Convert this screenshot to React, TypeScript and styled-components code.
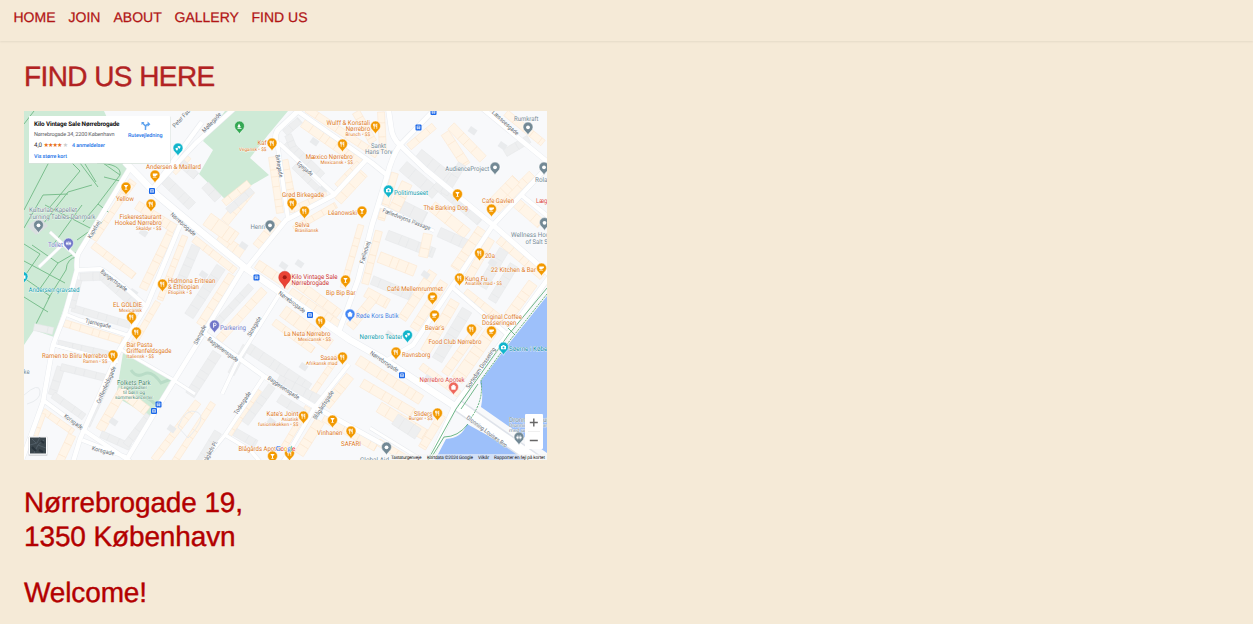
import React from "react";
import styled, { createGlobalStyle } from "styled-components";

const GlobalStyle = createGlobalStyle`
  body { margin: 0; background: #f5ead7; font-family: "Liberation Sans", Arial, sans-serif; }
`;

const Page = styled.div`
  height: 624px;
  overflow: hidden;
  background: #f5ead7;
`;
const NavBar = styled.nav`
  display: flex;
  gap: 13px;
  height: 41px;
  box-sizing: border-box;
  padding: 9px 14px 0 13.5px;
  box-shadow: 0 1px 2px rgba(0, 0, 0, 0.07);
`;
const NavLink = styled.a<{ $w: number }>`
  width: ${(p) => p.$w}px;
  white-space: nowrap;
  color: #b11414;
  font-size: 14px;
  line-height: 17px;
  text-decoration: none;
  text-rendering: geometricPrecision;
  -webkit-text-stroke: 0.25px #b11414;
`;
const Main = styled.main`
  display: flex;
  flex-direction: column;
  align-items: flex-start;
  padding: 19px 24px 0;
  text-rendering: geometricPrecision;
`;
const Title = styled.h1`
  margin: 0 0 17px;
  color: #b22222;
  font-size: 28px;
  font-weight: 400;
  line-height: 34px;
  letter-spacing: -0.58px;
  -webkit-text-stroke: 0.4px #b22222;
`;
const MapFrame = styled.div`
  width: 523px;
  height: 349px;
  overflow: hidden;
  margin-bottom: 26px;
`;
const MapSvg = styled.svg`
  display: block;
  font-family: Roboto, sans-serif;
  text-rendering: geometricPrecision;
`;
const Address = styled.p<{ $gap?: number }>`
  margin: 0 0 ${(p) => p.$gap ?? 0}px;
  color: #b30000;
  font-size: 28px;
  line-height: 33.5px;
  letter-spacing: -0.13px;
  -webkit-text-stroke: 0.4px #b30000;
`;

const ORANGE = "#f29900";
const FOOD = "#dd7a1e";
const GREY = "#738995";
const TEAL = "#12b5cb";
const CREAM = "#fff5e8";
const STONE = "#eeeff0";

const roads: [string, number][] = [
  ["M202 122L152 190", 4.5],
  ["M130 168L78 254Q76 262 77 270L65 314L53 345L43 402L22 460", 4.5],
  ["M125 162L157 195L200 231L247 269L280 292L350 340L380 357L456 407", 6.5],
  ["M237 106L196 143L152 190", 4.5],
  ["M180 225L147 305L120 349L80 439L73 462", 4.5],
  ["M77 270L100 269Q107 271 145 305", 4],
  ["M65 314L80 320L130 336", 3.5],
  ["M78 258L50 232M62 245L39 267", 2.5],
  ["M53 345L118 362", 2.5],
  ["M43 400L85 431L131 462M82 440L126 457", 4],
  ["M120 349L172 379L195 394", 3],
  ["M243 268L203 334L164 397L127 459", 4.5],
  ["M276 293L238 352L222 384", 3.5],
  ["M200 330L265 377L315 407L382 444", 4.5],
  ["M253 375L218 433L201 462M218 433L244 450L262 464", 3.5],
  ["M339 364L315 407L283 462", 4],
  ["M242 268L277 220L322 200L339 187L366 160", 4.5],
  ["M266 141L277 219", 4],
  ["M266 141L279 148L322 195", 4],
  ["M265 141Q263 132 268 129L290 109", 5],
  ["M284 110L340 148L371 174", 4.5],
  ["M374 106Q374 126 380 144L370 174L344 285L329 326", 5],
  ["M380 144L412 112L424 108", 4.5],
  ["M374 136L402 166L472 228L524 274", 5],
  ["M462 104L490 127L530 158L470 228", 4.5],
];

const shiftedRoads: [string, number][] = [
  ["M53 345L118 362", 2.5],
  ["M296 110L372 163L388 176", 4.5],
  ["M388 106L391 127Q392 138 400 145Q392 156 387 176L372 225L358 280L338 334", 5],
  ["M400 145L436 108", 4.5],
  ["M400 145L426 170L493 225L550 275", 5],
  ["M477 104L505 127L550 164L493 225", 4.5],
  ["M493 225L453 285L413 345L386 361", 4.5],
  ["M452 287L508 335", 4],
  ["M380 206L434 231", 3],
  ["M520 194L550 218", 4],
  ["M550 276L507 335L455 405L429 462", 4.5],
  ["M370 428L422 460", 3],
  ["M247 268L286 220L334 195L366 160", 4.5],
  ["M277 141L288 219", 4],
  ["M279 143L335 195", 4],
  ["M276 141Q274 132 281 127L298 111", 5],
  ["M280 293L238 360L222 394", 3.5],
  ["M265 375L225 435L203 462M225 435L250 450L262 464", 3.5],
  ["M349 364L315 407L283 462", 4],
];
const streetGrid = [...roads.slice(0, 12), roads[13], ...shiftedRoads];

type Strip = [number, number, number, number, number, string];
const strips: Strip[] = [
  [173, 172, 188, 156, 8, CREAM], [165, 180, 192, 206, 10, STONE], [178, 160, 196, 176, 9, STONE],
  [120, 199, 133, 181, 10, CREAM], [94, 240, 125, 193, 8, CREAM],
  [93, 245, 134, 276, 8, CREAM], [143, 289, 171, 232, 8, CREAM], [137, 205, 175, 229, 9, CREAM],
  [80, 277, 109, 276, 8, STONE], [104, 278, 139, 309, 10, STONE], [72, 308, 130, 325, 8, STONE],
  [79, 280, 72, 308, 7, STONE], [58, 343, 108, 354, 7, STONE], [64, 323, 123, 341, 7, CREAM],
  [34, 327, 53, 331, 9, STONE], [194, 239, 235, 271, 9, CREAM], [185, 236, 160, 300, 8, CREAM],
  [158, 302, 127, 355, 8, CREAM], [196, 246, 177, 290, 11, STONE], [221, 267, 189, 316, 11, STONE],
  [232, 275, 200, 325, 8, CREAM], [264, 290, 219, 340, 9, CREAM], [251, 286, 216, 324, 7, STONE],
  [218, 238, 242, 254, 12, CREAM], [225, 222, 251, 190, 9, CREAM], [207, 219, 235, 239, 14, CREAM],
  [228, 211, 252, 190, 9, STONE], [205, 185, 218, 199, 9, STONE], [224, 203, 249, 183, 9, CREAM],
  [272, 157, 280, 213, 7, CREAM], [287, 142, 322, 176, 8, STONE], [284, 160, 294, 212, 8, CREAM],
  [294, 166, 324, 195, 8, STONE], [294, 210, 327, 195, 8, CREAM], [294, 229, 336, 205, 8, CREAM],
  [338, 201, 364, 173, 10, CREAM], [285, 133, 300, 120, 9, STONE], [303, 123, 363, 165, 9, CREAM],
  [337, 186, 359, 163, 8, CREAM], [288, 135, 293, 147, 7, STONE], [307, 109, 377, 155, 8, CREAM],
  [381, 112, 383, 151, 9, CREAM], [356, 112, 373, 142, 8, CREAM], [257, 264, 290, 286, 10, CREAM],
  [257, 247, 279, 220, 10, CREAM], [289, 277, 339, 314, 10, CREAM], [289, 293, 340, 328, 12, CREAM],
  [361, 225, 343, 288, 8, CREAM], [379, 231, 365, 284, 9, CREAM], [395, 173, 381, 220, 9, CREAM],
  [409, 147, 434, 126, 9, CREAM], [418, 154, 449, 179, 13, STONE], [445, 133, 466, 165, 10, CREAM],
  [451, 126, 483, 159, 11, CREAM], [403, 166, 436, 194, 13, STONE], [435, 184, 480, 222, 10, STONE],
  [395, 203, 425, 218, 14, STONE], [407, 183, 394, 210, 12, CREAM], [432, 206, 467, 234, 12, CREAM],
  [444, 194, 462, 164, 9, STONE], [496, 210, 532, 174, 10, CREAM], [488, 208, 516, 179, 10, CREAM],
  [506, 113, 543, 143, 9, CREAM], [505, 153, 529, 139, 10, STONE], [513, 200, 541, 224, 11, CREAM],
  [387, 235, 434, 253, 12, STONE], [379, 257, 415, 271, 11, CREAM], [372, 280, 411, 296, 11, STONE],
  [439, 232, 470, 246, 11, STONE], [428, 234, 423, 257, 10, CREAM], [482, 229, 455, 269, 10, CREAM],
  [444, 282, 414, 329, 9, CREAM], [433, 272, 402, 319, 9, CREAM], [366, 292, 388, 304, 12, CREAM],
  [373, 299, 350, 327, 9, CREAM], [499, 239, 543, 276, 9, CREAM], [491, 239, 469, 277, 10, CREAM],
  [504, 250, 482, 287, 12, STONE], [465, 292, 502, 321, 10, CREAM], [533, 283, 509, 316, 10, CREAM],
  [514, 265, 492, 301, 10, STONE], [455, 301, 425, 352, 10, CREAM], [467, 310, 437, 360, 11, STONE],
  [492, 330, 457, 380, 12, CREAM], [479, 326, 445, 374, 10, CREAM], [421, 366, 459, 394, 9, CREAM],
  [358, 360, 421, 400, 12, CREAM], [350, 376, 326, 406, 9, CREAM], [338, 356, 310, 397, 8, CREAM],
  [283, 311, 330, 345, 12, CREAM], [274, 322, 313, 350, 8, CREAM], [247, 347, 309, 388, 10, STONE],
  [246, 346, 231, 374, 9, STONE], [217, 353, 190, 395, 10, STONE], [278, 379, 321, 401, 9, STONE],
  [259, 390, 228, 436, 8, CREAM], [272, 386, 245, 423, 10, STONE], [235, 432, 256, 444, 10, STONE],
  [308, 407, 284, 447, 8, CREAM], [279, 398, 304, 414, 10, STONE], [324, 417, 376, 447, 9, CREAM],
  [320, 421, 299, 454, 10, CREAM], [379, 407, 427, 436, 11, CREAM], [362, 383, 413, 413, 11, CREAM],
  [395, 419, 418, 434, 14, STONE], [442, 415, 422, 448, 9, CREAM], [378, 442, 408, 460, 9, CREAM],
  [218, 432, 198, 465, 9, STONE], [213, 403, 173, 464, 8, CREAM], [198, 402, 154, 460, 7, CREAM],
  [110, 377, 87, 426, 8, STONE], [61, 367, 52, 395, 9, STONE], [61, 367, 106, 378, 8, STONE],
  [53, 395, 84, 417, 9, STONE], [123, 390, 100, 430, 9, CREAM],
  [120, 390, 147, 411, 10, CREAM], [101, 434, 130, 447, 9, STONE], [126, 445, 149, 415, 9, STONE],
  [43, 411, 73, 432, 8, CREAM], [72, 435, 58, 465, 8, CREAM], [42, 413, 31, 443, 9, CREAM],
];

function Buildings({ data }: { data: Strip }) {
  const [x1, y1, x2, y2, w, fill] = data;
  const dx = x2 - x1, dy = y2 - y1, len = Math.hypot(dx, dy);
  const angle = (Math.atan2(dy, dx) * 180) / Math.PI;
  const boxes: React.ReactElement[] = [];
  let at = 0, i = Math.round(x1 + y1);
  while (at < len) {
    const size = Math.min(len - at, 7 + ((i * 7) % 9));
    const inset = (i * 5) % 3;
    boxes.push(<rect key={at} x={at} y={-w / 2 + inset / 2} width={size} height={w - inset} />);
    at += size;
    i += 3;
  }
  return (
    <g transform={`translate(${x1} ${y1}) rotate(${angle})`} fill={fill} stroke={fill === CREAM ? "#fce6ce" : "#e5e7e9"} strokeWidth=".5">
      {boxes}
    </g>
  );
}

type PinKind = "food" | "cup" | "bar" | "dot" | "bag" | "park" | "mask" | "p" | "cam" | "wc";
const pins: [number, number, string, PinKind][] = [
  [126, 188, ORANGE, "bar"], [155, 176, ORANGE, "cup"], [151, 205, ORANGE, "food"], [178, 149, TEAL, "mask"],
  [239.5, 127, "#34a853", "park"], [272, 144, ORANGE, "food"], [342.5, 145, ORANGE, "food"], [375.5, 127, ORANGE, "food"],
  [292, 204, ORANGE, "food"], [304.5, 212, ORANGE, "food"], [362, 212, ORANGE, "bar"], [270, 226, GREY, "dot"],
  [388.5, 191, TEAL, "cam"], [457.5, 195, ORANGE, "bar"], [491.5, 210, ORANGE, "cup"], [495, 168, GREY, "dot"],
  [528, 128, GREY, "dot"], [544, 168, GREY, "dot"], [544.5, 223.500, GREY, "dot"], [38.5, 226, GREY, "dot"],
  [68.5, 244, "#7177c9", "wc"], [23, 277.500, TEAL, "cam"], [162.5, 285, ORANGE, "food"], [131.5, 318, ORANGE, "food"],
  [136.5, 333, ORANGE, "food"], [113, 356, ORANGE, "food"], [214.5, 326, "#7177c9", "p"], [345.5, 281, ORANGE, "bar"],
  [350, 315, "#4285f4", "bag"], [320.5, 322, ORANGE, "food"], [479.5, 254, ORANGE, "food"], [459.5, 279, ORANGE, "food"],
  [541.5, 269, ORANGE, "cup"], [432.5, 298, ORANGE, "cup"], [434.5, 316, ORANGE, "cup"], [407.5, 336, TEAL, "mask"],
  [471.5, 330, ORANGE, "food"], [491.5, 332, ORANGE, "cup"], [503.5, 348, TEAL, "cam"], [396, 353, ORANGE, "food"],
  [342.5, 358, ORANGE, "food"], [453.5, 388, "#ee675c", "bag"], [437.5, 414, ORANGE, "food"], [303.5, 417, ORANGE, "food"],
  [332.5, 421, ORANGE, "bar"], [351, 432, ORANGE, "food"], [386.5, 448, GREY, "dot"], [289.5, 454, ORANGE, "food"],
  [272.5, 457, ORANGE, "bar"], [519, 438, GREY, "wc"],
];

function Glyph({ kind }: { kind: PinKind }) {
  switch (kind) {
    case "food": return <path d="M-2-2.500v1.700q0 .7.700.7t.7-.7v-1.700M-1.300-2.500v5M1.300 2.500v-5q-.9.600-.9 2.700h.9" stroke="#fff" strokeWidth=".75" fill="none" />;
    case "cup": return <path d="M-2.200-1.900h4.600v1.800H1.300q0 1.300-1.200 1.300H-.9q-1.300 0-1.300-1.300zM-2.200 1.800h3.800v.5h-3.800z" fill="#fff" />;
    case "bar": return <path d="M-2.200-2.200h4.400L.5 0v1.900H1.400v.6h-2.800v-.6h.9V0z" fill="#fff" />;
    case "bag": return <path d="M-2.200-1h4.400l-.4 3.200h-3.600zM-1-1v-1.200h2V-1" fill="#fff" stroke="#fff" strokeWidth=".4" />;
    case "park": return <path d="M-.5-2.700L1.400 1h-1.500v.8h-.8V1h-1.300zM-2 1.800h4v.7h-4z" fill="#fff" />;
    case "mask": return <path d="M-2.500-.3l2.400-.2q.3 2.500-.9 2.900-1.500-.5-1.500-2.700zM-.2-2.300l2.700.2q0 2.700-1.500 2.900-.2-1.900-1.200-1.500z" fill="#fff" />;
    case "cam": return <><path d="M-2.500-1.400h1.200l.5-.8h1.600l.5.8h1.200v3.400h-5z" fill="#fff" /><circle cy=".2" r=".9" fill={TEAL} /></>;
    case "wc": return <path d="M-1.500-2v1M1.500-2v1M-2.300-.6h1.600v1.500h-1.600zM.7-.6h1.600v1.500H.7zM-1.500.9v1.200M1.500.9v1.200M0-2v4" fill="#fff" stroke="#fff" strokeWidth=".5" />;
    case "p": return <path d="M-.9 2.400v-4.600H.4q1.200 0 1.200 1.300T.4.400H-.9" fill="none" stroke="#fff" strokeWidth=".9" />;
    default: return <circle r="1.900" fill="#fff" />;
  }
}

function Pin({ x, y, color, kind }: { x: number; y: number; color: string; kind: PinKind }) {
  return (
    <g transform={`translate(${x} ${y - 0.7})`}>
      <path d="M0 8C-.7 4.900-5 3.500-5-.2A5 5 0 0 1 5-.2C5 3.500.7 4.900 0 8z" fill={color} stroke="#fff" strokeWidth=".5" />
      <Glyph kind={kind} />
    </g>
  );
}

type Label = [string, number, number, number, string, number?];
const labels: Label[] = [
  ["Andersen & Maillard", 146, 168.5, 55, FOOD], ["Yellow", 116, 201.3, 18, FOOD],
  ["Fiskerestaurant", 119.5, 218.7, 42, FOOD], ["Hooked Nørrebro", 114.8, 225, 47, FOOD], ["Skaldyr • $$", 136, 230.3, 25.5, FOOD, 4.9],
  ["Kulturlab Kapellet", 29, 212.2, 48, GREY], ["Turning Tables Danmark", 29, 218.5, 66.5, GREY],
  ["Toilet", 48, 247.3, 15, "#7177c9"], ["Andersen-gravsted", 28.5, 291.8, 51, "#129eaf"],
  ["Kaf", 257.5, 145.3, 9, FOOD], ["Vegansk • $$", 239, 150.5, 27.5, FOOD, 4.9],
  ["Wulff & Konstali", 326.5, 125, 43.5, FOOD], ["Nørrebro", 345.7, 131.2, 24.5, FOOD], ["Brunch • $$", 345.5, 136.2, 24.7, FOOD, 4.9],
  ["Mæxico Nørrebro", 305.8, 158.8, 47, FOOD], ["Mexicansk • $$", 320.5, 163.5, 32.5, FOOD, 4.9],
  ["Sankt", 371, 147.7, 15, GREY], ["Hans Torv", 365, 153.8, 27.5, GREY],
  ["Grød Birkegade", 282, 197.4, 42, FOOD], ["Selva", 295, 226.5, 14.5, FOOD], ["Brasiliansk", 295, 231.5, 23.5, FOOD, 4.9],
  ["Léanowski", 328, 215.3, 29, FOOD], ["Henri", 250.5, 228.8, 14.5, GREY],
  ["Rumkraft", 514, 121, 24.5, GREY], ["AudienceProject", 445.3, 171, 44, GREY], ["Rolan", 535, 181.5, 16, GREY],
  ["Politimuseet", 394, 195, 34, "#129eaf"], ["The Barking Dog", 423.5, 209.5, 44.5, FOOD], ["Cafe Gavlen", 482, 203, 32, FOOD],
  ["Læge", 536, 202.5, 14.5, "#dc4d48"], ["Wellness House", 511, 237.3, 45, GREY], ["of Salt Spa", 525.5, 243.5, 29, GREY],
  ["Hidmona Eritrean", 168, 283, 47.5, FOOD], ["& Ethiopian", 168, 289, 31, FOOD], ["Etiopisk • $", 168, 294, 24, FOOD, 4.9],
  ["EL GOLDIE", 113, 306.5, 29, FOOD], ["Mexicansk", 119, 311.5, 23, FOOD, 4.9],
  ["Bar Pasta", 126.5, 347, 26, FOOD], ["Griffenfeldsgade", 126.5, 353, 45, FOOD], ["Italiensk • $$", 126.5, 358, 27.5, FOOD, 4.9],
  ["Ramen to Bíiru Nørrebro", 42, 358, 65.5, FOOD], ["Ramen • $$", 83, 362.7, 24.5, FOOD, 4.9],
  ["Parkering", 220, 329.5, 26, "#7177c9"], ["Kilo Vintage Sale", 291.5, 278.7, 46, "#c9302f"], ["Nørrebrogade", 291.5, 285, 37.5, "#c9302f"],
  ["Bip Bip Bar", 326, 295, 29.5, FOOD], ["Røde Kors Butik", 356, 318.3, 42.5, "#3f7de0"],
  ["La Neta Nørrebro", 284, 336.2, 46.5, FOOD], ["Mexicansk • $$", 298, 341, 33, FOOD, 4.9],
  ["20a", 485, 257.7, 10, FOOD], ["22 Kitchen & Bar", 491, 272, 45, FOOD], ["Kung Fu", 465, 280.5, 22.5, FOOD], ["Asiatisk mad • $$", 465, 285.2, 37, FOOD, 4.9],
  ["Café Mellemrummet", 387, 290.5, 56, FOOD], ["Bevar's", 425, 329.5, 19.5, FOOD], ["Original Coffee", 482, 319.3, 40, FOOD], ["Dosseringen", 482, 325.3, 34.5, FOOD],
  ["Food Club Nørrebro", 428.5, 344.3, 53, FOOD], ["Nørrebro Teater", 359.5, 339, 43, "#129eaf"],
  ["Søerne i København", 509, 350.8, 55, "#148eaa"], ["Ravnsborg", 402, 356.5, 28.5, FOOD],
  ["Sasaa", 320.5, 359.5, 16.5, FOOD], ["Afrikansk mad", 306, 364.5, 31.5, FOOD, 4.9],
  ["Nørrebro Apotek", 419.5, 382, 45, "#dc4d48"], ["Sliders", 414, 415.5, 18.5, FOOD], ["Burger • $$", 408.8, 420.2, 24, FOOD, 4.9],
  ["Folkets Park", 117, 384.500, 33.5, "#48886b", 6.9], ["Legepladser", 121, 389.2, 26, "#48886b", 4.9], ["til børn og", 123, 394.2, 22, "#48886b", 4.9], ["sommerkoncerter", 115, 399, 38, "#48886b", 4.9],
  ["Kate's Joint", 266.5, 416.2, 32, FOOD], ["Asiatisk", 281.5, 421, 17, FOOD, 4.9], ["fusionskøkken • $$", 258, 425.7, 40.5, FOOD, 4.9],
  ["Vinhanen", 317, 435, 25.5, FOOD], ["SAFARI", 341, 446, 20, FOOD], ["Blågårds Apotek", 238.5, 451, 44, FOOD],
  ["Global Aid", 360, 461.5, 29, GREY], ["ke", 23.5, 373.5, 6, GREY],
  ["Dronning Louises Bro", 509, 421.7, 60, GREY], ["Dronning Louises", 509, 426.700, 40, GREY, 4.9], ["med udsigt", 509, 431.5, 27, GREY, 4.9],
];
const streets: [string, number, number, number, number][] = [
  ["Peter Fabers Gade", 175, 128, -47, 44], ["Møllegade", 204.5, 133, -47, 25], ["Birkegade", 275.3, 155, 80, 23],
  ["Egegade", 296.5, 164, 40, 19], ["Nørrebrogade", 170, 215, 42, 32], ["Nørrebrogade", 278, 294, 37, 32],
  ["Nørrebrogade", 369.5, 354, 34, 33], ["Læssøesgade", 491.5, 113, 42, 34], ["Fælledvejens Passage", 382, 212, 21, 51],
  ["Fælledvej", 363.5, 264, -73, 23], ["Kapelvej", 91, 239, -60, 20], ["Bangertsgade", 100, 272.500, 37, 32],
  ["Tjørnegade", 85, 322.5, 13, 26], ["Stengade", 197, 345, -63, 21], ["Slotsgade", 250.5, 337, -60, 22],
  ["Baggesensgade", 207, 340, 37, 37], ["Baggesensgade", 267, 379, 34, 37], ["Griffenfeldsgade", 100, 404, -66, 40],
  ["Korsgade", 63.5, 417, 36, 22], ["Korsgade", 91.5, 450, 14, 23], ["Todesgade", 237, 415, -57, 26],
  ["Blågårds Pl.", 206, 464, -62, 25], ["Blågårdsgade", 316, 420, -57, 33], ["Sortedam Dossering", 469, 389, -56, 48],
  ["Dronning Louises Bro", 466, 418.5, 36.5, 49],
];
const transit = [[152, 191], [256.5, 277.5], [310, 315], [418.5, 127.5], [433.5, 112], [402, 375.3], [158.5, 404.5], [154, 411]];
const courtyards = [[282, 261], [298, 259], [313, 137], [323, 183], [132, 288], [142, 228], [202, 270], [242, 241], [302, 362], [270, 417], [424, 270], [501, 141], [471, 126], [112, 417], [170, 424], [491, 258], [388, 330], [427, 374]];

function CityMap() {
  return (
    <MapSvg width="523" height="349" viewBox="24 111 523 349" role="img" aria-label="Map">
      <rect x="24" y="111" width="523" height="349" fill="#f8f9fb" />
      <path d="M24 111H108L156 164L130 168L78 249L77 270L54 337L34 330L24 345z" fill="#ceead6" />
      <path d="M104 111H166V168L130 168z" fill="#f8f9fb" />
      <path d="M225 111H288L268 135L250 158L269 175L226 200L199 174L213 150L203 141z" fill="#ceead6" />
      <path d="M123 353L171 380L151 417L116 397z" fill="#ceead6" />
      <path d="M131 370q5 8 13 4t17 9l10-4M140 396q10 2 15 8" stroke="#b9dcc7" strokeWidth="3" fill="none" />
      <path d="M34 111L24 124M49 162L24 210M72 163L80 171L50 207M80 163L98 187M97 163Q122 164 120 175L98 204L112 215L77 240M120 175L103 163M104 177L120 181M96 182L85 164M92 185L68 192L36 233M68 194L43 195L24 228M82 205L53 245M45 205L94 230M98 204L83 222M24 244L40 254L24 277M32 245L58 263L39 290M24 278L50 296L36 324M24 261L65 283M24 297L48 312M58 263L77 252M77 257Q67 258 66 270L48 299" stroke="#70b985" strokeWidth=".9" fill="none" />
      <path d="M27 226l13-9 8 9-12 9z" fill="#dadfe0" />
      {strips.map((s, i) => <Buildings key={i} data={s} />)}
      {courtyards.map(([x, y], i) => (
        <rect key={i} x={x} y={y} width="8" height="6" fill="#e9ebed" transform={`rotate(35 ${x} ${y})`} />
      ))}
      <path d="M24 395q15-13 16-4t-13 13M178 427q8-20 19-15t-9 26z" stroke="#e9ecef" fill="none" />
      <path d="M547 296L511 341L480 382Q484 393 481 407L547 453zM467 424Q462 438 446 439L435 460H532z" fill="#9dc0fa" />
      <path d="M457 405L540 463" stroke="#dfe3ea" strokeWidth="13" />
      <path d="M457 405L540 463" stroke="#fff" strokeWidth="10" />
      {streetGrid.map(([d, w], i) => <path key={`c${i}`} d={d} fill="none" stroke="#e8ebef" strokeWidth={w + 1} strokeLinejoin="round" />)}
      {streetGrid.map(([d, w], i) => <path key={i} d={d} fill="none" stroke="#fff" strokeWidth={w} strokeLinejoin="round" />)}
      <path d="M547 288L509 334L456 409L428 460M478 384L461 409M468 424Q458 437 444 437L431 458M508 328L515 335" fill="none" stroke="#4da66b" strokeWidth=".8" />
      <path d="M547 294L511 339L481 380Q484 400 471 418" fill="none" stroke="#4da66b" strokeWidth=".9" strokeDasharray="2 1" />
      <g fill="#626a72" fontSize="6" stroke="#fff" strokeWidth=".8" paintOrder="stroke">
        {streets.map(([t, x, y, a, w], i) => <text key={i} transform={`translate(${x} ${y}) rotate(${a})`} textLength={w} lengthAdjust="spacingAndGlyphs">{t}</text>)}
      </g>
      <g stroke="#fff" strokeWidth=".8" strokeOpacity=".8" paintOrder="stroke" strokeLinejoin="round">
        {labels.map(([t, x, y, w, c, s], i) => <text key={i} x={x} y={y} textLength={w} lengthAdjust="spacingAndGlyphs" fill={c} fontSize={s ?? 6.6}>{t}</text>)}
      </g>
      {transit.map(([x, y], i) => (
        <g key={i} transform={`translate(${x} ${y})`}>
          <rect x="-3" y="-3" width="6" height="6" rx="1" fill="#1a67e8" />
          <path d="M-1.400-1.500h2.800V1h-2.800zM-1.200.900v.900M1.200.900v.900M-1.400-.1h2.800" fill="none" stroke="#fff" strokeWidth=".6" />
        </g>
      ))}
      {pins.map(([x, y, c, k], i) => <Pin key={i} x={x} y={y} color={c} kind={k} />)}
      <path d="M284.700 288.500c-1-5-6-6.300-6-11.300a6 6 0 0 1 12 0c0 5-5 6.300-6 11.300z" fill="#ea4335" stroke="#c5221f" strokeWidth=".4" />
      <circle cx="284.700" cy="277.300" r="2" fill="#a11a14" />
      <text x="275.500" y="450.500" fontSize="7" fontWeight="500" textLength="20" stroke="#fff" strokeWidth=".8" paintOrder="stroke" fontFamily="Lato, sans-serif">
        <tspan fill="#4285f4">G</tspan><tspan fill="#ea4335">o</tspan><tspan fill="#fbbc04">o</tspan><tspan fill="#4285f4">g</tspan><tspan fill="#34a853">l</tspan><tspan fill="#ea4335">e</tspan>
      </text>
      <rect x="29" y="116.500" width="141.500" height="47.200" rx=".6" fill="#d8e2dc" />
      <rect x="29" y="116" width="141" height="47" rx=".6" fill="#fff" />
      <text x="34" y="125.800" fontSize="6.300" fontWeight="700" fill="#111" textLength="85.500">Kilo Vintage Sale Nørrebrogade</text>
      <text x="34" y="135.600" fontSize="5.500" fill="#5d6064" textLength="80.500">Nørrebrogade 34, 2200 København</text>
      <text x="34" y="146.900" fontSize="6.200" fill="#333" textLength="8">4,0</text>
      <text x="43.500" y="146.600" fontSize="6" fill="#e7711b" textLength="19" fontFamily="DejaVu Sans">★★★★</text>
      <text x="62.800" y="146.600" fontSize="6" fill="#ccc" textLength="5" fontFamily="DejaVu Sans">★</text>
      <g fill="#1a73e8" fontSize="5.400" fontWeight="500">
        <text x="72" y="146.700" textLength="33">4 anmeldelser</text>
        <text x="34" y="158" textLength="33">Vis større kort</text>
        <text x="128" y="137.200" textLength="34.500">Rutevejledning</text>
      </g>
      <path d="M145.500 130v-4l-3-3M145.500 127.500q0-3 2.500-3h1" fill="none" stroke="#5ca1ed" strokeWidth="1.500" />
      <path d="M147.600 121.500l2.800 2.800-2.800 2.400zM141.500 122h3l-3 3z" fill="#5ca1ed" />
      <rect x="28.500" y="436.500" width="19" height="19.500" rx="1" fill="#d8dadd" />
      <rect x="29" y="436.500" width="18" height="18" rx="1" fill="#fff" />
      <rect x="30" y="437.500" width="16" height="16" fill="#3c474e" />
      <path d="M30 445l7-2 3-6M34 453l4-8 8 3M38 445l6-5M32 439l4 4" stroke="#56626c" strokeWidth=".8" fill="none" />
      <path d="M32 447l4 4M41 441l3 2M39 450l4 2" stroke="#28333b" strokeWidth="2" />
      <rect x="525" y="414" width="18" height="35" rx="1" fill="#fff" />
      <path d="M529.800 422.500h8M533.800 418.500v8M529.800 440.500h8" stroke="#666" strokeWidth="1.400" />
      <path d="M528 431.500h12" stroke="#e6e6e6" strokeWidth=".6" />
      <path d="M390 454H547V460H390z" fill="#f5f5f5" fillOpacity=".6" />
      <g fill="#151515" fontSize="4.700">
        <text x="391" y="459" textLength="30.500">Tastaturgenveje</text>
        <text x="427" y="459" textLength="46">Kortdata ©2024 Google</text>
        <text x="478" y="459" textLength="11">Vilkår</text>
        <text x="494" y="459" textLength="51">Rapporter en fejl på kortet</text>
      </g>
    </MapSvg>
  );
}

const links: [string, number][] = [["HOME", 42], ["JOIN", 32], ["ABOUT", 48], ["GALLERY", 64], ["FIND US", 60]];

export default function App() {
  return (
    <Page>
      <GlobalStyle />
      <NavBar>
        {links.map(([name, w]) => <NavLink key={name} $w={w}>{name}</NavLink>)}
      </NavBar>
      <Main>
        <Title>FIND US HERE</Title>
        <MapFrame><CityMap /></MapFrame>
        <Address $gap={23}>Nørrebrogade 19,<br />1350 København</Address>
        <Address>Welcome!</Address>
      </Main>
    </Page>
  );
}
